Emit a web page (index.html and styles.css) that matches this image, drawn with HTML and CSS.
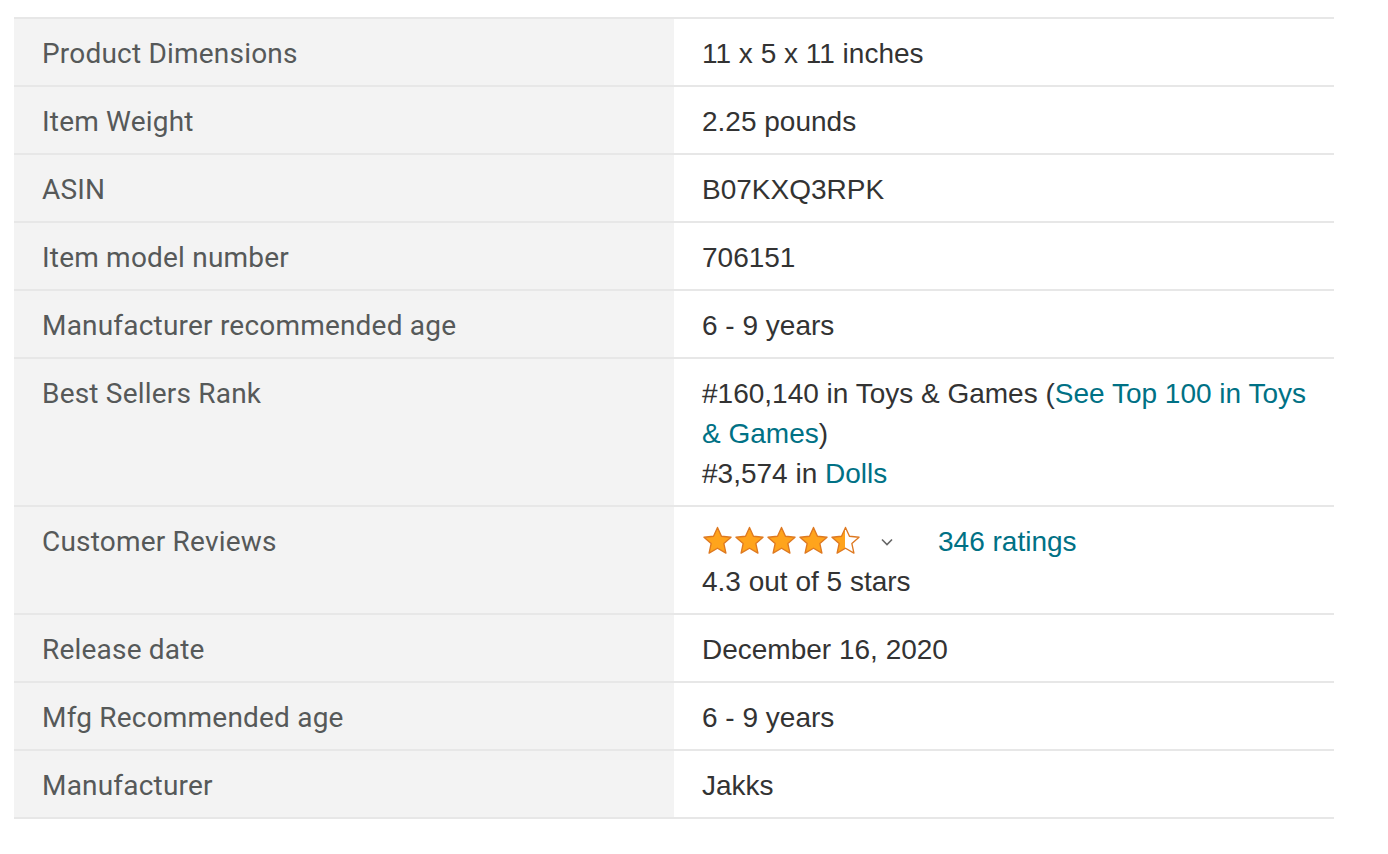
FILE: index.html
```html
<!DOCTYPE html>
<html>
<head>
<meta charset="utf-8">
<link rel="stylesheet" href="styles.css">
</head>
<body>
<table class="details">
  <tbody>
    <tr><th>Product Dimensions</th><td>11 x 5 x 11 inches</td></tr>
    <tr><th>Item Weight</th><td>2.25 pounds</td></tr>
    <tr><th>ASIN</th><td>B07KXQ3RPK</td></tr>
    <tr><th>Item model number</th><td>706151</td></tr>
    <tr><th>Manufacturer recommended age</th><td>6 - 9 years</td></tr>
    <tr><th>Best Sellers Rank</th><td>#160,140 in Toys &amp; Games (<a href="#">See Top 100 in Toys &amp; Games</a>)<br>#3,574 in <a href="#">Dolls</a></td></tr>
    <tr><th>Customer Reviews</th><td>
      <div class="rating-line">
        <span class="stars">
          <svg class="star" viewBox="0 0 32 30"><path d="M16 1.5l4.1 9.1 9.9 1-7.4 6.6 2.1 9.8L16 23l-8.7 5 2.1-9.8L2 11.6l9.9-1z" fill="#ffa41c" stroke="#de7921" stroke-width="1.4" stroke-linejoin="round"/></svg>
          <svg class="star" viewBox="0 0 32 30"><path d="M16 1.5l4.1 9.1 9.9 1-7.4 6.6 2.1 9.8L16 23l-8.7 5 2.1-9.8L2 11.6l9.9-1z" fill="#ffa41c" stroke="#de7921" stroke-width="1.4" stroke-linejoin="round"/></svg>
          <svg class="star" viewBox="0 0 32 30"><path d="M16 1.5l4.1 9.1 9.9 1-7.4 6.6 2.1 9.8L16 23l-8.7 5 2.1-9.8L2 11.6l9.9-1z" fill="#ffa41c" stroke="#de7921" stroke-width="1.4" stroke-linejoin="round"/></svg>
          <svg class="star" viewBox="0 0 32 30"><path d="M16 1.5l4.1 9.1 9.9 1-7.4 6.6 2.1 9.8L16 23l-8.7 5 2.1-9.8L2 11.6l9.9-1z" fill="#ffa41c" stroke="#de7921" stroke-width="1.4" stroke-linejoin="round"/></svg>
          <svg class="star" viewBox="0 0 32 30"><defs><linearGradient id="half"><stop offset="50%" stop-color="#ffa41c"/><stop offset="50%" stop-color="#ffffff"/></linearGradient></defs><path d="M16 1.5l4.1 9.1 9.9 1-7.4 6.6 2.1 9.8L16 23l-8.7 5 2.1-9.8L2 11.6l9.9-1z" fill="url(#half)" stroke="#de7921" stroke-width="1.4" stroke-linejoin="round"/></svg>
        </span>
        <svg class="chevron" viewBox="0 0 12 8"><path d="M1 1.5l5 5 5-5" fill="none" stroke="#666" stroke-width="1.6"/></svg>
        <a href="#" class="ratings">346 ratings</a>
      </div>
      <div>4.3 out of 5 stars</div>
    </td></tr>
    <tr><th>Release date</th><td>December 16, 2020</td></tr>
    <tr><th>Mfg Recommended age</th><td>6 - 9 years</td></tr>
    <tr><th>Manufacturer</th><td>Jakks</td></tr>
  </tbody>
</table>
</body>
</html>
```
FILE: styles.css
```css
html, body {
  margin: 0;
  padding: 0;
  background: #ffffff;
}

.details {
  margin: 17px 0 0 14px;
  width: 1320px;
  border-collapse: collapse;
  border-spacing: 0;
}

.details tr {
  border-top: 2px solid #e7e7e7;
  border-bottom: 2px solid #e7e7e7;
}

.details th {
  width: 604px;
  background: #f3f3f3;
  text-align: left;
  vertical-align: top;
  font-family: Roboto, "Open Sans", sans-serif;
  font-weight: 400;
  font-size: 28px;
  letter-spacing: 0.2px;
  color: #565959;
  line-height: 40px;
  padding: 15px 28px 11px;
}

.details td {
  vertical-align: top;
  font-family: "Liberation Sans", Arial, sans-serif;
  font-size: 28px;
  color: #333333;
  line-height: 40px;
  padding: 15px 28px 11px;
}

.details a {
  color: #007185;
  text-decoration: none;
}

.rating-line {
  display: flex;
  align-items: center;
  height: 40px;
}

.stars {
  display: flex;
  gap: 1px;
  margin-top: -3px;
}

.star {
  width: 31px;
  height: 29px;
  display: block;
}

.chevron {
  width: 12px;
  height: 8px;
  margin-left: 20px;
  display: block;
}

.ratings {
  margin-left: 45px;
}
```
